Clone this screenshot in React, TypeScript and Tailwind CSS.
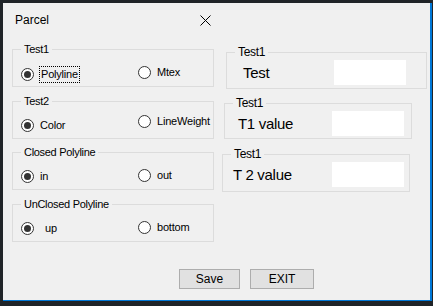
import React from 'react';

const font = { fontFamily: '"Liberation Sans", Arial, sans-serif' };

function Radio({ checked }: { checked?: boolean }) {
  return (
    <span className="flex h-[13px] w-[13px] shrink-0 items-center justify-center rounded-full border border-[#333333] bg-white">
      {checked && <span className="h-[7px] w-[7px] rounded-full bg-[#333333]" />}
    </span>
  );
}

interface RadioGroupProps {
  title: string;
  first: string;
  second: string;
  secondTop: number;
  focus?: boolean;
  firstGap?: string;
}

function RadioGroup({ title, first, second, focus, firstGap, secondTop }: RadioGroupProps) {
  return (
    <fieldset className="h-[45px] w-[202px] border border-[#dcdcdc]">
      <legend className="ml-[8px] px-[3px] text-[11px] leading-[14px] tracking-[-0.3px] text-black">{title}</legend>
      <div className="relative flex items-start">
        <div className="ml-[8px] mt-[10px] flex items-center">
          <Radio checked />
          {focus ? (
            <span className="ml-[5px] border border-dotted border-black px-[1px] text-[11px] leading-[15px] tracking-[-0.2px]">
              {first}
            </span>
          ) : (
            <span className={`${firstGap ?? 'ml-[6px]'} text-[11px] leading-[15px] tracking-[-0.2px]`}>{first}</span>
          )}
        </div>
        <div
          className={`absolute left-[125px] flex items-center ${
            secondTop === 6 ? 'top-[6px]' : 'top-[9px]'
          }`}
        >
          <Radio />
          <span className="ml-[6px] text-[11px] leading-[15px] tracking-[-0.2px]">{second}</span>
        </div>
      </div>
    </fieldset>
  );
}

interface ValueGroupProps {
  label: string;
  className: string;
  textWidth: string;
  textPad: string;
}

function ValueGroup({ label, className, textWidth, textPad }: ValueGroupProps) {
  return (
    <fieldset className={`border border-[#dcdcdc] ${className}`}>
      <legend className="ml-[8px] px-[3px] text-[12px] leading-[14px] tracking-[-0.3px] text-black">Test1</legend>
      <div className="mt-[1px] flex h-[25px] items-center">
        <span className={`${textPad} ${textWidth} shrink-0 whitespace-pre text-[15px] leading-[17px] tracking-[-0.3px] text-black`}>
          {label}
        </span>
        <span className="h-[25px] w-[72px] shrink-0 bg-white" />
      </div>
    </fieldset>
  );
}

export default function App() {
  return (
    <div className="h-[306px] w-[433px] overflow-hidden bg-[#202428] pl-[3px] pt-[3px]" style={font}>
      <div className="h-[298px] w-[429px] border-r-2 border-b border-[#0078d7] bg-[#f0f0f0]">
        {/* Title bar */}
        <div className="flex h-[39px] items-start pt-[9px]">
          <span className="ml-[12px] text-[12px] leading-[16px] text-black">Parcel</span>
          <svg className="ml-[151px] mt-[3px]" width="11" height="11" viewBox="0 0 11 11">
            <path d="M0.5 0.5 L10.5 10.5 M10.5 0.5 L0.5 10.5" stroke="#000" strokeWidth="1" />
          </svg>
        </div>

        {/* Body */}
        <div className="flex">
          <div className="ml-[9px] flex flex-col">
            <RadioGroup title="Test1" first="Polyline" second="Mtex" secondTop={9} focus />
            <div className="mt-[7px]">
              <RadioGroup title="Test2" first="Color" second="LineWeight" secondTop={6} />
            </div>
            <div className="mt-[6px]">
              <RadioGroup title="Closed Polyline" first="in" second="out" secondTop={9} />
            </div>
            <div className="mt-[7px]">
              <RadioGroup title="UnClosed Polyline" first="up" second="bottom" secondTop={9} firstGap="ml-[11px]" />
            </div>
          </div>

          <div className="ml-[8px] mt-[3px] flex flex-col">
            <ValueGroup label="Test" className="ml-[4px] h-[44px] w-[201px]" textWidth="w-[107px]" textPad="pl-[16px]" />
            <ValueGroup label="T1 value" className="ml-[2px] mt-[7px] h-[43px] w-[188px]" textWidth="w-[107px]" textPad="pl-[13px]" />
            <ValueGroup label="T 2 value" className="mt-[8px] h-[45px] w-[188px]" textWidth="w-[109px]" textPad="pl-[10px]" />
          </div>
        </div>

        {/* Buttons */}
        <div className="mt-[27px] flex gap-[10px] pl-[176px]">
          <button className="h-[20px] w-[61px] border border-[#adadad] bg-[#e1e1e1] text-[12px] leading-[16px] text-black">
            Save
          </button>
          <button className="h-[20px] w-[64px] border border-[#adadad] bg-[#e1e1e1] text-[12px] leading-[16px] text-black">
            EXIT
          </button>
        </div>
      </div>
    </div>
  );
}
